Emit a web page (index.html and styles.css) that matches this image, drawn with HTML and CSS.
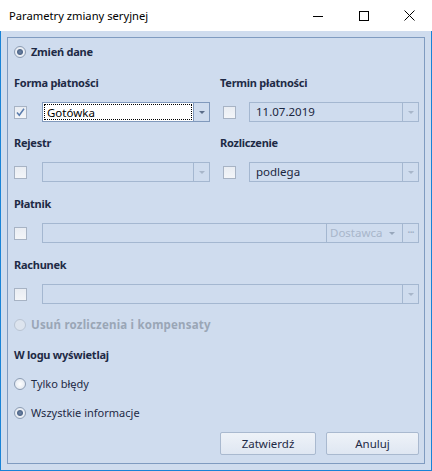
FILE: index.html
```html
<!DOCTYPE html>
<html lang="pl">
<head>
<meta charset="utf-8">
<title>Parametry zmiany seryjnej</title>
<link rel="stylesheet" href="styles.css">
</head>
<body>
<div class="window">
  <div class="titlebar">
    <span class="title">Parametry zmiany seryjnej</span>
    <div class="controls">
      <span class="ctl"><svg width="10" height="10" viewBox="0 0 10 10"><path d="M0 5.5H10" stroke="#000" stroke-width="1"/></svg></span>
      <span class="ctl"><svg width="10" height="10" viewBox="0 0 10 10"><rect x="0.5" y="0.5" width="9" height="9" fill="none" stroke="#000" stroke-width="1"/></svg></span>
      <span class="ctl"><svg width="11" height="11" viewBox="0 0 11 11"><path d="M0.5 0.5L10.5 10.5M10.5 0.5L0.5 10.5" stroke="#000" stroke-width="1"/></svg></span>
    </div>
  </div>
  <div class="client">
    <div class="group">
      <div class="opt opt-top"><span class="radio checked"></span><span class="bold">Zmień dane</span></div>

      <div class="pair pair-1">
        <div class="col">
          <div class="lbl">Forma płatności</div>
          <div class="frow">
            <span class="check checked"><svg width="11" height="11" viewBox="0 0 11 11"><path d="M2 5.5L4.3 8.3L9 1.8" fill="none" stroke="#5a7cad" stroke-width="1.5"/></svg></span>
            <div class="combo active">
              <div class="ctext"><span class="focus">Gotówka</span></div>
              <div class="cbtn"><span class="arrow dark"></span></div>
            </div>
          </div>
        </div>
        <div class="col col-r">
          <div class="lbl">Termin płatności</div>
          <div class="frow">
            <span class="check"></span>
            <div class="combo">
              <div class="ctext">11.07.2019</div>
              <div class="cbtn"><span class="arrow"></span></div>
            </div>
          </div>
        </div>
      </div>

      <div class="pair pair-2">
        <div class="col">
          <div class="lbl">Rejestr</div>
          <div class="frow">
            <span class="check"></span>
            <div class="combo">
              <div class="ctext"></div>
              <div class="cbtn"><span class="arrow"></span></div>
            </div>
          </div>
        </div>
        <div class="col col-r">
          <div class="lbl">Rozliczenie</div>
          <div class="frow">
            <span class="check"></span>
            <div class="combo">
              <div class="ctext">podlega</div>
              <div class="cbtn"><span class="arrow"></span></div>
            </div>
          </div>
        </div>
      </div>

      <div class="lbl lbl-wide">Płatnik</div>
      <div class="frow">
        <span class="check"></span>
        <div class="combo">
          <div class="ctext"></div>
          <div class="csub"><span>Dostawca</span><span class="arrow"></span></div>
          <div class="cbtn"><span class="dots">···</span></div>
        </div>
      </div>

      <div class="lbl lbl-wide">Rachunek</div>
      <div class="frow">
        <span class="check"></span>
        <div class="combo">
          <div class="ctext"></div>
          <div class="cbtn"><span class="arrow"></span></div>
        </div>
      </div>

      <div class="opt opt-dis"><span class="radio disabled"></span><span class="bold wide">Usuń rozliczenia i kompensaty</span></div>

      <div class="lbl lbl-log">W logu wyświetlaj</div>
      <div class="opt opt-log1"><span class="radio"></span><span>Tylko błędy</span></div>
      <div class="opt opt-log2"><span class="radio checked"></span><span>Wszystkie informacje</span></div>

      <div class="buttons">
        <button class="btn btn-ok">Zatwierdź</button>
        <button class="btn btn-cancel">Anuluj</button>
      </div>
    </div>
  </div>
</div>
</body>
</html>
```

FILE: styles.css
```css
* { box-sizing: border-box; }
html, body { margin: 0; padding: 0; }
body {
  font-family: "Noto Sans", "Open Sans", sans-serif;
  font-size: 11px;
  color: #1e2a45;
  background: #ffffff;
}
.window {
  width: 432px;
  height: 471px;
  display: flex;
  flex-direction: column;
}
.titlebar {
  height: 31px;
  background: #ffffff;
  display: flex;
  align-items: center;
  padding-left: 9px;
}
.title {
  color: #000;
  font-size: 11.2px;
  flex: 1;
  line-height: 16px;
  margin-top: 1px;
}
.controls {
  display: flex;
  height: 31px;
}
.ctl {
  width: 45px;
  height: 31px;
  display: flex;
  align-items: center;
  justify-content: center;
}
.ctl:first-child { width: 45px; margin-right: 1px; }
.ctl:last-child { width: 46px; }
.client {
  height: 440px;
  background: #cfdcee;
  border: 1px solid #1883d7;
  border-top: none;
  padding: 6px;
}
.group {
  height: 427px;
  border: 1px solid #7f9bc0;
  padding: 6px 5px 0 6px;
  display: flex;
  flex-direction: column;
}
.bold { font-weight: 700; letter-spacing: -0.25px; }
.bold.wide { letter-spacing: 0.2px; font-size: 11.5px; }
.opt {
  display: flex;
  align-items: center;
  height: 16px;
  line-height: 16px;
}
.opt .radio { margin-right: 5px; }
.opt-dis { margin-top: 13px; color: #9aa6b6; }
.opt-log1 { margin-top: 13px; }
.opt-log2 { margin-top: 13px; }
.radio {
  width: 12px;
  height: 12px;
  border-radius: 50%;
  border: 1px solid #8d9db3;
  background: radial-gradient(circle, #ffffff 0%, #e6ebf2 70%, #d5dce6 100%);
  display: inline-flex;
  align-items: center;
  justify-content: center;
  flex: none;
}
.radio.checked::after {
  content: "";
  width: 6px;
  height: 6px;
  border-radius: 50%;
  background: radial-gradient(circle, #6f86a8 0%, #4f6688 60%, #8ea0bb 100%);
}
.radio.disabled {
  border-color: #b9c4d3;
  background: #dde4ee;
}
.lbl {
  font-weight: 700;
  letter-spacing: -0.25px;
  height: 16px;
  line-height: 16px;
}
.pair {
  display: grid;
  grid-template-columns: 196px 199px;
  column-gap: 10px;
}
.pair-1 { margin-top: 15px; }
.pair-2 { margin-top: 13px; }
.lbl-wide { margin-top: 14px; }
.frow {
  display: flex;
  align-items: center;
  margin-top: 11px;
  height: 20px;
}
.check {
  width: 13px;
  height: 13px;
  border: 1px solid #a7b3c4;
  background: linear-gradient(#e9edf3, #f3f5f8);
  margin-right: 15px;
  flex: none;
  display: flex;
  align-items: center;
  justify-content: center;
}
.col-r .check { margin-left: 3px; margin-right: 13px; }
.combo {
  flex: 1;
  height: 20px;
  border: 1px solid #a4b7d0;
  display: flex;
  align-items: stretch;
}
.combo.active {
  border-color: #8099bc;
  background: #ffffff;
}
.ctext {
  flex: 1;
  padding: 0 0 0 6px;
  line-height: 18px;
  font-size: 11.5px;
  color: #1a2640;
}
.combo.active .ctext { padding: 1px; color: #000; }
.focus {
  display: block;
  height: 16px;
  line-height: 15px;
  border: 1px dotted #000;
  padding-left: 2px;
}
.cbtn {
  width: 16px;
  border-left: 1px solid #a4b7d0;
  display: flex;
  align-items: center;
  justify-content: center;
}
.combo.active .cbtn {
  border-left-color: #8099bc;
  background: #cfdcee;
}
.arrow {
  width: 0;
  height: 0;
  border-left: 3px solid transparent;
  border-right: 3px solid transparent;
  border-top: 3px solid #a8b6c9;
}
.arrow.dark { border-top-color: #5a6c88; }
.csub {
  width: 76px;
  border-left: 1px solid #a4b7d0;
  color: #a8b6ca;
  font-size: 11.5px;
  display: flex;
  align-items: center;
  justify-content: space-between;
  padding: 0 7px 0 3px;
  line-height: 18px;
}
.csub .arrow { border-top-color: #98a7bb; }
.dots {
  color: #9fb0c6;
  font-size: 12px;
  letter-spacing: -1px;
  line-height: 18px;
}
.lbl-log { margin-top: 14px; }
.buttons {
  display: flex;
  justify-content: flex-end;
  gap: 10px;
  margin-top: 11px;
}
.btn {
  height: 23px;
  font-family: "Noto Sans", "Open Sans", sans-serif;
  font-size: 11.5px;
  color: #1e2a45;
  border: 1px solid #a9b9cf;
  border-radius: 2px;
  background: linear-gradient(#eef2f8, #dfe7f2);
  padding: 0;
  line-height: 20px;
}
.btn-ok { width: 96px; }
.btn-cancel { width: 93px; }
```
